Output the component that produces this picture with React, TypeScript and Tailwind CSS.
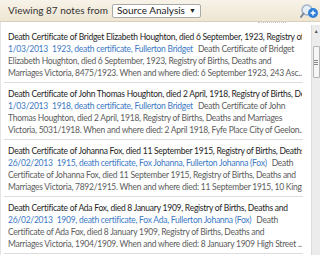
import React from 'react';

type Note = {
  title: string;
  date: string;
  tags: string[];
  lead: string;
  lines: string[];
};

const NOTES: Note[] = [
  {
    title: 'Death Certificate of Bridget Elizabeth Houghton, died 6 September, 1923, Registry of Births',
    date: '1/03/2013',
    tags: ['1923', 'death certificate', 'Fullerton Bridget'],
    lead: 'Death Certificate of Bridget',
    lines: [
      'Elizabeth Houghton, died 6 September, 1923, Registry of Births, Deaths and',
      'Marriages Victoria, 8475/1923. When and where died: 6 September 1923, 243 Asc...',
    ],
  },
  {
    title: 'Death Certificate of John Thomas Houghton, died 2 April, 1918, Registry of Births, Deaths',
    date: '1/03/2013',
    tags: ['1918', 'death certificate', 'Fullerton Bridget'],
    lead: 'Death Certificate of John',
    lines: [
      'Thomas Houghton, died 2 April, 1918, Registry of Births, Deaths and Marriages',
      'Victoria, 5031/1918. When and where died: 2 April 1918, Fyfe Place City of Geelon...',
    ],
  },
  {
    title: 'Death Certificate of Johanna Fox, died 11 September 1915, Registry of Births, Deaths',
    date: '26/02/2013',
    tags: ['1915', 'death certificate', 'Fox Johanna', 'Fullerton Johanna (Fox)'],
    lead: 'Death',
    lines: [
      'Certificate of Johanna Fox, died 11 September 1915, Registry of Births, Deaths and',
      'Marriages Victoria, 7892/1915. When and where died: 11 September 1915, 10 King...',
    ],
  },
  {
    title: 'Death Certificate of Ada Fox, died 8 January 1909, Registry of Births, Deaths and',
    date: '26/02/2013',
    tags: ['1909', 'death certificate', 'Fox Ada', 'Fullerton Johanna (Fox)'],
    lead: 'Death',
    lines: [
      'Certificate of Ada Fox, died 8 January 1909, Registry of Births, Deaths and',
      'Marriages Victoria, 1904/1909. When and where died: 8 January 1909 High Street ...',
    ],
  },
];

const SearchBadge = () => (
  <svg width="18" height="16" viewBox="0 0 18 16" className="shrink-0">
    <circle cx="7" cy="7" r="5" fill="#e6eef7" stroke="#9fb3c8" strokeWidth="1.5" />
    <line x1="3.5" y1="10.5" x2="1" y2="14" stroke="#7a8a9a" strokeWidth="2" strokeLinecap="round" />
    <circle cx="13" cy="10" r="5" fill="#2f7fd6" />
    <path d="M10.5 10h5M13 7.5v5" stroke="#ffffff" strokeWidth="1.4" />
  </svg>
);

const NoteRow = ({ note }: { note: Note }) => (
  <div className="pl-[4px] pr-[1px] pt-[5px] pb-[3px] border-b border-[#dddddd] mr-[8px] ml-[3px]">
    <div className="whitespace-nowrap overflow-hidden text-[#1e1e1e] leading-[12px]">{note.title}</div>
    <div className="whitespace-nowrap overflow-hidden leading-[12px]">
      <span className="text-[#3d79c4]">{note.date}</span>
      <span className="text-[#3d79c4] ml-[4px]">{note.tags.join(', ')}</span>
      <span className="text-[#5c5c5c] ml-[5px]">{note.lead}</span>
    </div>
    {note.lines.map((l, i) => (
      <div key={i} className="whitespace-nowrap overflow-hidden text-[#5c5c5c] leading-[12px]">
        {l}
      </div>
    ))}
  </div>
);

export default function App() {
  return (
    <div className="w-[320px] h-[255px] overflow-hidden bg-white text-[8.5px] tracking-[-0.25px] font-['Lato','Liberation_Sans',sans-serif]">
      <header className="h-[22px] flex items-center justify-between pl-[8px] pr-[2px] bg-gradient-to-b from-[#f8f3e9] to-[#eee5d2] border-b border-[#d9cfbb]">
        <div className="flex items-center gap-[4px] tracking-normal">
          <span className="text-[#333333] text-[10px]">Viewing 87 notes from</span>
          <div className="h-[14px] flex items-center gap-[4px] px-[4px] bg-white border border-[#a9a9a9] rounded-[2px] text-[#222222] text-[10px]">
            <span>Source Analysis</span>
            <span className="text-[7px] leading-none">▼</span>
          </div>
        </div>
        <SearchBadge />
      </header>
      <div className="flex h-[233px]">
        <div className="flex-1 overflow-hidden border-l border-[#e4e4e4]">
          <div className="h-[4px] flex justify-end pr-[25px]">
            <div className="w-[28px] border-t border-dotted border-[#c8c8c8]" />
          </div>
          {NOTES.map((n, i) => (
            <NoteRow key={i} note={n} />
          ))}
        </div>
        <div className="w-[9px] mt-[3px] bg-[#ececec] border-l border-[#dcdcdc] flex flex-col items-center">
          <span className="text-[5px] text-[#555555] mt-[4px] leading-none">▲</span>
          <div className="mt-[12px] w-[7px] h-[32px] bg-[#f6f6f6] border border-[#b5b5b5] rounded-[1px] flex flex-col items-center justify-center gap-[1px]">
            <div className="w-[4px] h-px bg-[#888888]" />
            <div className="w-[4px] h-px bg-[#888888]" />
            <div className="w-[4px] h-px bg-[#888888]" />
          </div>
        </div>
      </div>
    </div>
  );
}
